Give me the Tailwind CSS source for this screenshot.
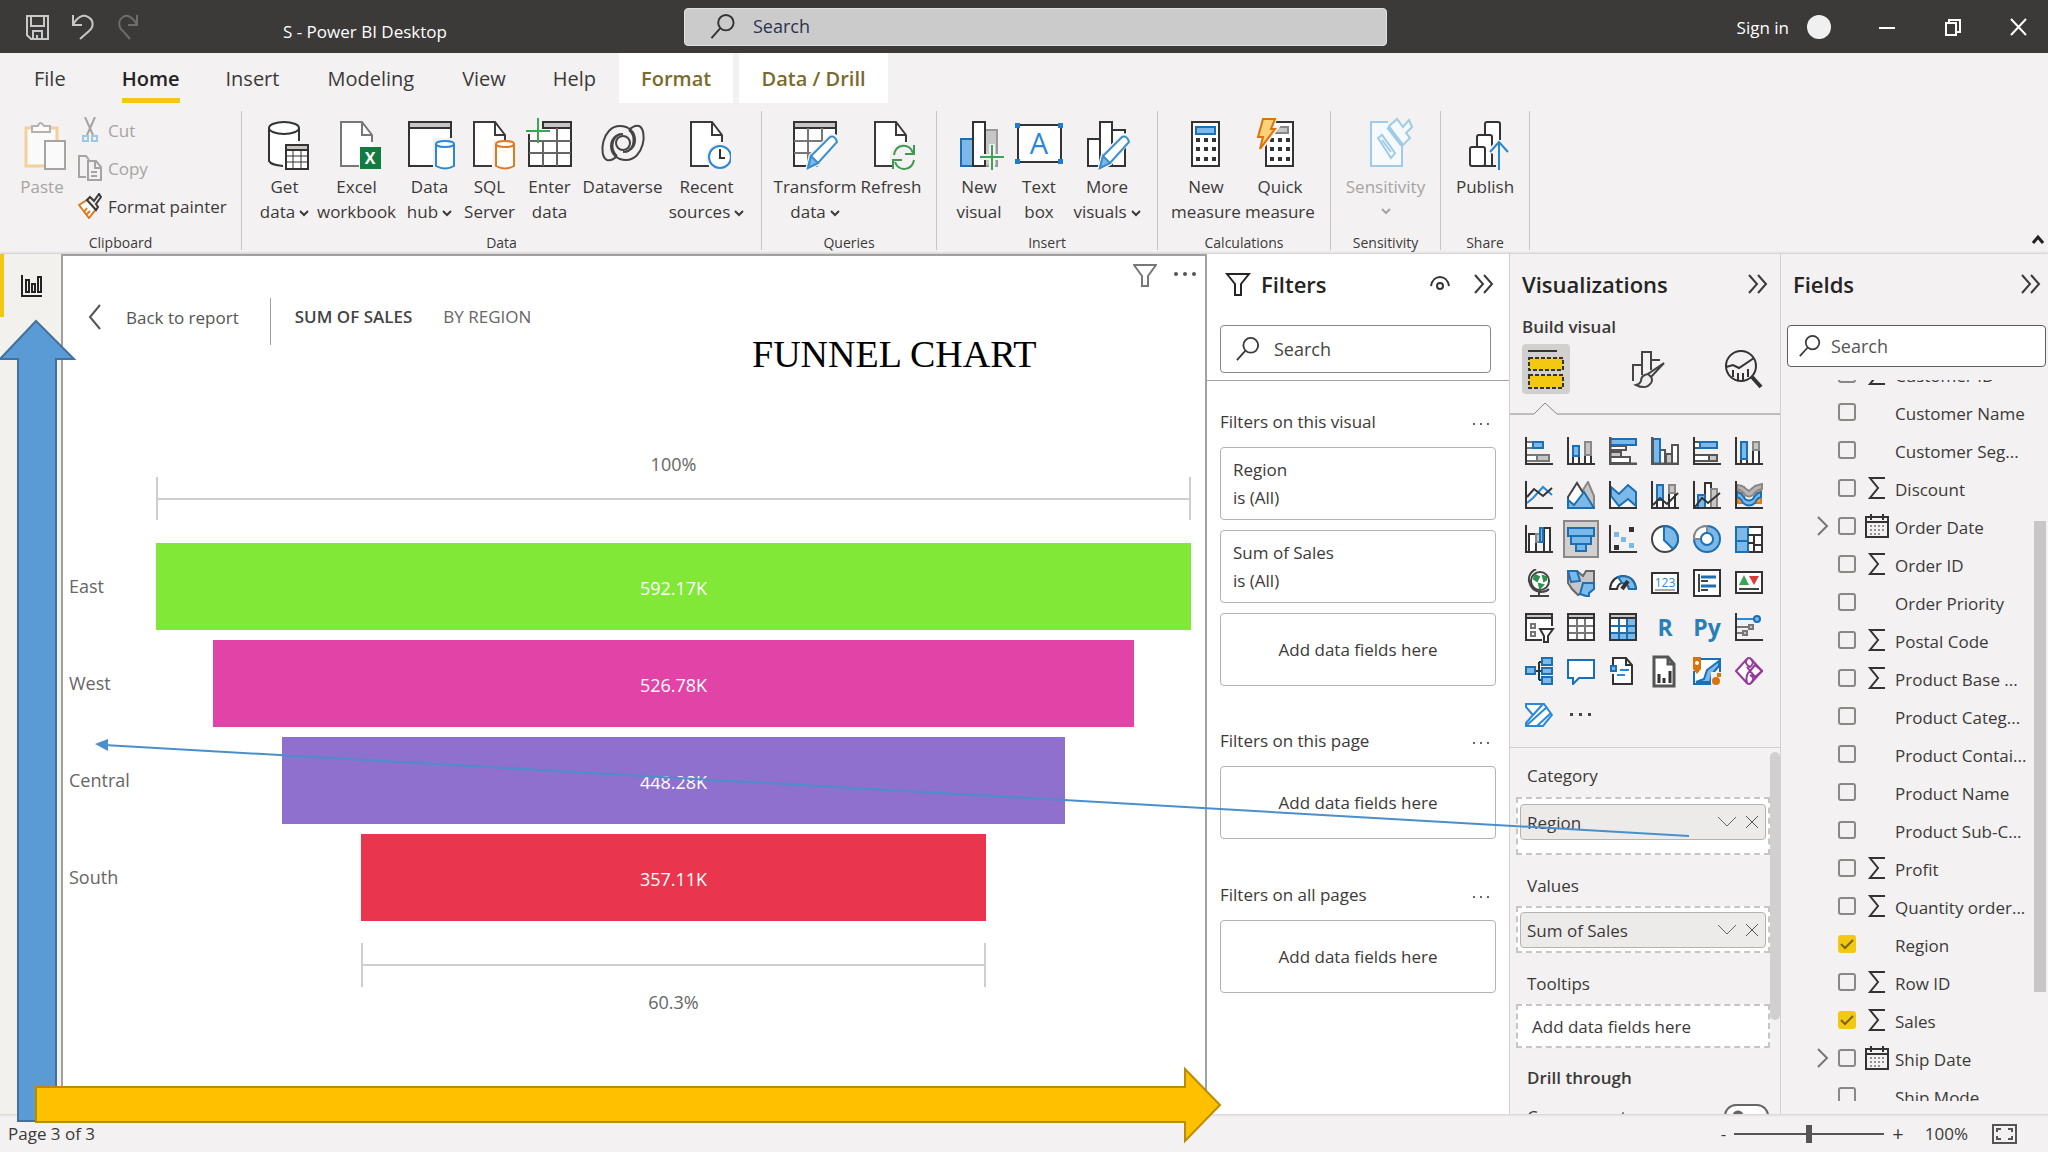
<!DOCTYPE html>
<html lang="en">
<head>
    <meta charset="UTF-8">
    <meta name="viewport" content="width=device-width, initial-scale=1.0">
    <title>S - Power BI Desktop</title>
    <script src="https://cdn.jsdelivr.net/npm/@tailwindcss/browser@4"></script>
</head>
<body class="relative flex h-screen flex-col overflow-hidden bg-[#f3f1f1] font-['Open_Sans','Noto_Sans',sans-serif] text-[17px] leading-[25px] text-[#3b3a39]">

<!-- Shared symbols -->
<svg class="hidden">
    <symbol id="doc" viewBox="0 0 48 52"><path d="M8 4h21l11 13v31H8z" fill="#fff"/><path d="M39 24v-7L29 4H8v44h18M29 4v13h10" fill="none" stroke="currentColor" stroke-width="2"/></symbol>
    <symbol id="chev" viewBox="0 0 10 8"><path d="M1 2l4 4 4-4" fill="none" stroke="currentColor" stroke-width="2"/></symbol>
    <symbol id="search" viewBox="0 0 26 26"><circle cx="16" cy="9" r="8" fill="none" stroke="currentColor" stroke-width="2"/><path d="M10 15L1 25" stroke="currentColor" stroke-width="2"/></symbol>
    <symbol id="collapse" viewBox="0 0 20 20"><path d="M1 1l8 9-8 9M10 1l8 9-8 9" fill="none" stroke="currentColor" stroke-width="2"/></symbol>
    <symbol id="pencil" viewBox="0 0 48 52"><path d="M17 50l3-12L40 18q4-1 6 4L27 45z" fill="#fff" stroke="#f3f1f1" stroke-width="5"/><path d="M17 50l3-12L39 19q5-2 7 5L27 45z" fill="#fff" stroke="#3a8fcf" stroke-width="2"/><path d="M17 50l3-12 7 7z" fill="#7db9e8" stroke="#3a8fcf" stroke-width="2"/></symbol>
    <symbol id="axis" viewBox="0 0 28 28"><path d="M1 0v27h27" fill="none" stroke="#333" stroke-width="2"/></symbol>
</svg>

<!-- Title bar -->
<header class="flex h-[53px] shrink-0 items-center bg-[#3b3a39] text-white">
    <div class="flex w-[684px] shrink-0 items-center">
        <button aria-label="Save" class="ml-[25px] h-7 w-6"><svg class="h-7 w-6" viewBox="0 0 24 28" fill="none" stroke="#c8c8c8" stroke-width="2"><path d="M2 3h21v23H6l-4-4zM6 3v10h13V3M8 26v-8h9v8M12 22v4"/></svg></button>
        <button aria-label="Undo" class="ml-[22px] h-7 w-6"><svg class="h-7 w-6" viewBox="0 0 24 28" fill="none" stroke="#c8c8c8" stroke-width="2"><path d="M2 2v10h9M2 12C6 4 12 1 17 4c6 3 6 10 1 14l-9 8"/></svg></button>
        <button aria-label="Redo" disabled class="ml-[22px] h-7 w-6"><svg class="h-7 w-6" viewBox="0 0 24 28" fill="none" stroke="#6e6d6c" stroke-width="2"><path d="M20 2v10h-9M20 12C16 4 10 1 6 4c-5 3-5 10 0 14l7 8"/></svg></button>
        <span class="ml-[142px] pt-[10px]">S - Power BI Desktop</span>
    </div>
    <label class="flex h-[38px] w-[703px] items-center rounded-sm border border-[#e0e0e0] bg-[#cbcbcb] pl-[25px] text-[#333]">
        <svg class="h-[25px] w-[26px]"><use href="#search"/></svg>
        <input type="text" aria-label="Search" placeholder="Search" class="ml-[17px] flex-1 text-[18px] outline-none placeholder:text-[#2b3350]">
    </label>
    <div class="ml-auto flex items-center">
        <button class="pt-[2px]">Sign in</button>
        <span class="ml-[18px] size-6 rounded-full bg-[#f0f0f0]"></span>
        <button aria-label="Minimize" class="ml-[46px] size-5"><svg class="size-5" viewBox="0 0 20 20"><path d="M2 11h16" stroke="#fff" stroke-width="2"/></svg></button>
        <button aria-label="Restore" class="ml-[46px] size-5"><svg class="size-5" viewBox="0 0 20 20" fill="none" stroke="#fff" stroke-width="2"><path d="M3 6h10v12H3zM6 6V3h11v12h-4"/></svg></button>
        <button aria-label="Close" class="mr-[19px] ml-[46px] size-5"><svg class="size-5" viewBox="0 0 20 20" stroke="#fff" stroke-width="2"><path d="M2 2l15 16M17 2L2 18"/></svg></button>
    </div>
</header>

<!-- Ribbon tabs -->
<nav class="flex h-[50px] shrink-0 items-stretch text-[20px]">
    <button class="ml-[34px]">File</button>
    <button class="ml-[56px] border-b-[5px] border-[#f2c811] pt-[5px] font-semibold text-[#252423]">Home</button>
    <button class="ml-[46px]">Insert</button>
    <button class="ml-[48px]">Modeling</button>
    <button class="ml-[48px]">View</button>
    <button class="ml-[47px]">Help</button>
    <button class="ml-[23px] w-[114px] bg-white font-semibold text-[#7a6a2c]">Format</button>
    <button class="ml-[6px] w-[149px] bg-white font-semibold text-[#7a6a2c]">Data / Drill</button>
</nav>

<!-- Ribbon -->
<section class="flex h-[151px] shrink-0 whitespace-nowrap pt-2 pb-1">
    <div class="flex w-[242px] flex-col border-r border-[#c8c6c4]">
        <div class="flex">
            <button disabled class="ml-[18px] flex w-12 flex-col items-center pt-[7px] text-[#a6a4a2]">
                <svg class="h-[52px] w-12" viewBox="0 0 48 52" fill="#fafafa" stroke-width="2"><path d="M8 10h31v38H8z" stroke="#f3cf9c" stroke-width="3"/><path d="M14 14v-6h6q2-6 6 0h6v6z" stroke="#b5b3b1"/><path d="M27 23h20v28H27z" stroke="#a6a4a2"/></svg>
                <span class="mt-1">Paste</span>
            </button>
            <div class="ml-3 flex flex-col">
                <button disabled class="flex h-[38px] items-center gap-[6px] text-[#a6a4a2]">
                    <svg class="h-[26px] w-6" viewBox="0 0 24 26" fill="none" stroke="#a6a4a2" stroke-width="2"><path d="M7 0l8 18M17 0L9 18"/><path d="M5 19h5v5H5zM14 19h5v5h-5z" stroke="#9cc8e6"/></svg>Cut
                </button>
                <button disabled class="flex h-[38px] items-center gap-[6px] text-[#a6a4a2]">
                    <svg class="h-[26px] w-6" viewBox="0 0 24 26" fill="none" stroke="#a6a4a2" stroke-width="2"><path d="M8 22H1V1h7l3 4M10 6h8l5 6v13H10zM17 6v7h6M13 17h6M13 21h6"/></svg>Copy
                </button>
                <button class="flex h-[38px] items-center gap-[6px]">
                    <svg class="h-[26px] w-6" viewBox="0 0 24 26" fill="none" stroke-width="2"><path d="M1 12l8-5 9 9-7 9z" fill="#fff" stroke="#e07a1f"/><path d="M6 19l3-4M8 22l4-4" stroke="#e07a1f"/><path d="M9 7l3-3 4 4 5-7 2 3-5 7 2 3-2 3z" fill="#eee" stroke="#3b3a39"/></svg>Format painter
                </button>
            </div>
        </div>
        <span class="mt-auto text-center text-[14px] leading-[14px]">Clipboard</span>
    </div>

    <div class="flex w-[520px] flex-col border-r border-[#c8c6c4]">
        <div class="flex items-start justify-center">
            <button class="flex w-[72px] flex-col items-center pt-[7px]">
                <svg class="h-[52px] w-12" viewBox="0 0 48 52" stroke="#333" stroke-width="2"><path d="M8 10v33q3 4 13 5h16V10" fill="#fff" stroke="none"/><ellipse cx="23" cy="10" rx="15" ry="6" fill="#fff"/><path d="M8 10v33q2 4 14 5M38 10v13" fill="none"/><path d="M25 27h22v24H25z" fill="#fff"/><path d="M25 27h22v5H25z" fill="#c8c6c4"/><path d="M25 38h22M25 44h22M32 32v19M40 32v19" stroke-width="1"/></svg>
                <span class="mt-1">Get<br>data<svg class="ml-1 inline h-2 w-[10px]"><use href="#chev"/></svg></span>
            </button>
            <button class="flex w-[72px] flex-col items-center pt-[7px]">
                <svg class="h-[52px] w-12" viewBox="0 0 48 52"><use href="#doc" color="#777"/><path d="M27 29h21v22H27z" fill="#107c41"/><text x="37" y="46" text-anchor="middle" font-size="16" font-weight="700" fill="#fff">X</text></svg>
                <span class="mt-1">Excel<br>workbook</span>
            </button>
            <button class="flex w-[74px] flex-col items-center pt-[7px]">
                <svg class="h-[52px] w-12 overflow-visible" viewBox="0 0 48 52" fill="#fff" stroke="#333" stroke-width="2"><path d="M3 4h42v44H3z"/><path d="M3 4h42v6H3z" fill="#c8c6c4"/><path d="M27 20h24v34H27z" fill="#f3f1f1" stroke="none"/><g stroke="#2b88d8"><path d="M30 26v22q9 5 18 0V26"/><ellipse cx="39" cy="26" rx="9" ry="3"/></g></svg>
                <span class="mt-1">Data<br>hub<svg class="ml-1 inline h-2 w-[10px]"><use href="#chev"/></svg></span>
            </button>
            <button class="flex w-[46px] flex-col items-center pt-[7px]">
                <svg class="h-[52px] w-12 overflow-visible" viewBox="0 0 48 52" fill="#fff" stroke-width="2"><use href="#doc"/><path d="M27 22h24v32H27z" fill="#f3f1f1"/><g stroke="#e07a1f"><path d="M30 26v22q9 5 18 0V26"/><ellipse cx="39" cy="26" rx="9" ry="3"/></g></svg>
                <span class="mt-1">SQL<br>Server</span>
            </button>
            <button class="flex w-[74px] flex-col items-center pt-[7px]">
                <svg class="h-[52px] w-12 overflow-visible" viewBox="0 0 48 52" fill="none" stroke="#333" stroke-width="2"><path d="M3 48V4h42v44z" fill="#fff"/><path d="M17 4h28v6H17z" fill="#c8c6c4"/><path d="M3 23h42M3 35h42M17 23v25M31 10v38" stroke="#666"/><path d="M0 1h16v15H0z" fill="#f3f1f1" stroke="none"/><path d="M12 0v25M0 13h24" stroke="#3aa655"/></svg>
                <span class="mt-1">Enter<br>data</span>
            </button>
            <button class="flex w-[72px] flex-col items-center pt-[7px]">
                <svg class="h-[52px] w-12" viewBox="0 0 48 52" fill="none" stroke="#444" stroke-width="2"><g id="swirl"><path d="M18 38c-3 3-6 5-10 4C-1 38 3 8 21 8c9 0 15 6 15 14 0 7-5 12-12 12"/><path d="M18 38c-7-6-6-18 3-22"/></g><use href="#swirl" transform="rotate(180 24 25)"/><circle cx="24" cy="25" r="7"/></svg>
                <span class="mt-1">Dataverse</span>
            </button>
            <button class="flex w-24 flex-col items-center pt-[7px]">
                <svg class="h-[52px] w-12" viewBox="0 0 48 52" fill="#fff" stroke-width="2"><use href="#doc"/><circle cx="37" cy="39" r="14" fill="#f3f1f1"/><circle cx="37" cy="39" r="11" stroke="#2b88d8"/><path d="M37 31v9h5" fill="none" stroke="#333"/></svg>
                <span class="mt-1">Recent<br>sources<svg class="ml-1 inline h-2 w-[10px]"><use href="#chev"/></svg></span>
            </button>
        </div>
        <span class="mt-auto text-center text-[14px] leading-[14px]">Data</span>
    </div>

    <div class="flex w-[175px] flex-col border-r border-[#c8c6c4]">
        <div class="flex items-start justify-center">
            <button class="flex w-[84px] flex-col items-center pt-[7px]">
                <svg class="h-[52px] w-12" viewBox="0 0 48 52" fill="none" stroke="#333" stroke-width="2"><path d="M3 4h42v44H3z" fill="#fff"/><path d="M3 4h42v6H3z" fill="#c8c6c4"/><path d="M3 23h42M3 35h42M17 10v38M31 10v38" stroke="#777"/><path d="M28 50h18V24z" fill="#f3f1f1" stroke="#f3f1f1" stroke-width="4"/><use href="#pencil"/></svg>
                <span class="mt-1">Transform<br>data<svg class="ml-1 inline h-2 w-[10px]"><use href="#chev"/></svg></span>
            </button>
            <button class="flex w-[68px] flex-col items-center pt-[7px]">
                <svg class="h-[52px] w-12" viewBox="0 0 48 52" fill="none" stroke-width="2"><use href="#doc"/><circle cx="37" cy="39" r="14" fill="#f3f1f1"/><path d="M27 37c2-12 16-12 19-2M47 27v9h-9M47 42c-2 11-15 12-19 2M26 51v-9h9" stroke="#3d9a50"/></svg>
                <span class="mt-1">Refresh</span>
            </button>
        </div>
        <span class="mt-auto text-center text-[14px] leading-[14px]">Queries</span>
    </div>

    <div class="flex w-[221px] flex-col border-r border-[#c8c6c4]">
        <div class="flex items-start justify-center">
            <button class="flex w-[60px] flex-col items-center pt-[7px]">
                <svg class="h-[52px] w-12 overflow-visible" viewBox="0 0 48 52" stroke="#333" stroke-width="2"><path d="M6 21h12v27H6z" fill="#7db9e8" stroke="#1a6fb5"/><path d="M30 12h12v36H30z" fill="#c8c6c4" stroke="#999"/><path d="M18 4h12v44H18z" fill="#fff"/><path d="M37 26v27M25 39h24" stroke="#f3f1f1" stroke-width="6"/><path d="M37 27v25M25 39h24" stroke="#3aa655" stroke-width="2"/></svg>
                <span class="mt-1">New<br>visual</span>
            </button>
            <button class="flex w-[60px] flex-col items-center pt-[7px]">
                <svg class="h-[52px] w-12" viewBox="0 0 48 52"><path d="M3 7h43v37H3z" fill="#fff" stroke="#333" stroke-width="2"/><path d="M0 5h5v5H0zM43 5h5v5h-5zM0 41h5v5H0zM43 41h5v5h-5z" fill="#1a7fd0"/><text x="24" y="36" text-anchor="middle" font-size="29" fill="#2b88d8">A</text></svg>
                <span class="mt-1">Text<br>box</span>
            </button>
            <button class="flex w-[76px] flex-col items-center pt-[7px]">
                <svg class="h-[52px] w-12" viewBox="0 0 48 52" fill="#fff" stroke="#333" stroke-width="2"><path d="M5 21h12v27H5zM29 12h13v36H29zM17 4h12v44H17z"/><use href="#pencil"/></svg>
                <span class="mt-1">More<br>visuals<svg class="ml-1 inline h-2 w-[10px]"><use href="#chev"/></svg></span>
            </button>
        </div>
        <span class="mt-auto text-center text-[14px] leading-[14px]">Insert</span>
    </div>

    <div class="flex w-[173px] flex-col border-r border-[#c8c6c4]">
        <div class="flex items-start justify-center">
            <button class="flex w-[72px] flex-col items-center pt-[7px]">
                <svg class="h-[52px] w-12" viewBox="0 0 48 52"><path d="M10 4h27v44H10z" fill="#fff" stroke="#333" stroke-width="2"/><path d="M14 9h19v7H14z" fill="#7db9e8" stroke="#1a6fb5" stroke-width="2"/><path d="M14 22h20M14 31h20M14 41h20" stroke="#333" stroke-width="4" stroke-dasharray="4 4"/></svg>
                <span class="mt-1">New<br>measure</span>
            </button>
            <button class="flex w-[76px] flex-col items-center pt-[7px]">
                <svg class="h-[52px] w-12" viewBox="0 0 48 52"><path d="M10 4h27v44H10z" fill="#fff" stroke="#333" stroke-width="2"/><path d="M16 9h16v6H16z" fill="#c8c6c4" stroke="#888" stroke-width="2"/><path d="M14 22h20M14 31h20M14 41h20" stroke="#333" stroke-width="4" stroke-dasharray="4 4"/><path d="M7 0h12l-4 10h5L3 33l3-14H1z" fill="#ffd279" stroke="#f3f1f1" stroke-width="5"/><path d="M7 1h12l-4 10h4L4 31l3-12H2z" fill="#ffd279" stroke="#d9730d" stroke-width="2"/></svg>
                <span class="mt-1">Quick<br>measure</span>
            </button>
        </div>
        <span class="mt-auto text-center text-[14px] leading-[14px]">Calculations</span>
    </div>

    <div class="flex w-[110px] flex-col border-r border-[#c8c6c4]">
        <button disabled class="flex flex-col items-center pt-[7px] text-[#a6a4a2]">
            <svg class="h-[52px] w-12 overflow-visible" viewBox="0 0 48 52" fill="#f6fafc" stroke="#9fcbe8" stroke-width="2"><path d="M26 4H9v44h31V26"/><path d="M16 20l4-3 13 18-4 5zM20 22l9 12"/><path d="M27 8l8-7 6 8 6-7 3 7-6 6 4 5-8 8z"/><path d="M26 9l14 18" stroke-width="4"/></svg>
            <span class="mt-1">Sensitivity</span>
            <svg class="mt-2 h-2 w-[10px]"><use href="#chev"/></svg>
        </button>
        <span class="mt-auto text-center text-[14px] leading-[14px]">Sensitivity</span>
    </div>

    <div class="flex w-[89px] flex-col border-r border-[#c8c6c4]">
        <button class="flex flex-col items-center pt-[7px]">
            <svg class="h-[52px] w-12" viewBox="0 0 48 52" fill="#fff" stroke="#333" stroke-width="2"><path d="M24 48V6q0-2 2-2h11q2 0 2 2v17M39 48H24"/><path d="M16 48V19q0-2 2-2h11q2 0 2 2v29z"/><rect x="9" y="29" width="15" height="19" rx="2"/><path d="M38 22v30M38 24l-9 10M38 24l9 10" stroke="#f3f1f1" stroke-width="6" fill="none"/><path d="M38 52V24M29 34l9-10 9 10" stroke="#2b88c8" fill="none"/></svg>
            <span class="mt-1">Publish</span>
        </button>
        <span class="mt-auto text-center text-[14px] leading-[14px]">Share</span>
    </div>
    <button aria-label="Collapse ribbon" class="mr-1 mb-1 ml-auto self-end"><svg class="h-3 w-3" viewBox="0 0 12 12"><path d="M1 9l5-6 5 6" fill="none" stroke="#222" stroke-width="3"/></svg></button>
</section>

<main class="flex min-h-0 flex-1 shadow-[0_0_3px_#aaa]">
    <!-- View switcher -->
    <aside class="w-[61px] shrink-0 bg-[#f3f1ee]">
        <button aria-label="Report view" class="flex h-[63px] w-full items-center border-l-4 border-[#f2c811] pl-4">
            <svg class="h-6 w-6" viewBox="0 0 24 24" fill="none" stroke="#222" stroke-width="2"><path d="M2 1v21h20M6 6h3v12H6zM12 10h3v8h-3zM18 3h3v15h-3z"/></svg>
        </button>
    </aside>

    <!-- Report canvas -->
    <section class="flex min-w-0 flex-1 flex-col border-2 border-b-0 border-[#a3a1a0] bg-white">
        <div class="flex h-[92px] shrink-0 items-start">
            <a href="#" class="mt-[48px] ml-[24px] flex items-center text-[#555]">
                <svg class="h-[26px] w-4" viewBox="0 0 16 26"><path d="M13 1L3 13l10 12" fill="none" stroke="#555" stroke-width="2"/></svg>
                <span class="ml-[23px]">Back to report</span>
            </a>
            <span class="mt-[42px] ml-[31px] h-[47px] w-px bg-[#a3a1a0]"></span>
            <span class="mt-[48px] ml-[24px] font-semibold text-[#444]">SUM OF SALES</span>
            <span class="mt-[48px] ml-[31px] text-[#666]">BY REGION</span>
            <button aria-label="Filters" class="mt-2 ml-auto"><svg class="h-6 w-6" viewBox="0 0 24 24"><path d="M1 1h22l-8 11v10H9V12z" fill="none" stroke="#777" stroke-width="2"/></svg></button>
            <button aria-label="More options" class="mt-[13px] mr-2 ml-4"><svg class="h-[10px] w-6" viewBox="0 0 24 10" fill="#555"><circle cx="3" cy="5" r="2"/><circle cx="12" cy="5" r="2"/><circle cx="21" cy="5" r="2"/></svg></button>
        </div>
        <div class="flex flex-1 flex-col pr-[14px] text-[18px] text-[#666]">
            <div class="ml-[93px] pt-[104px] text-center">100%</div>
            <div class="ml-[93px] h-[43px] border-x-2 border-[#cfcdce]"><div class="h-[23px] border-b-2 border-[#cfcdce]"></div></div>
            <div id="funnel" class="mt-[23px] flex flex-col gap-[10px]"></div>
            <div class="mt-[22px] ml-[93px] flex justify-center"><div class="h-[44px] border-x-2 border-[#cfcdce]" style="width:60.3%"><div class="h-[23px] border-b-2 border-[#cfcdce]"></div></div></div>
            <div class="mt-[3px] ml-[93px] text-center">60.3%</div>
        </div>
    </section>

    <!-- Filters -->
    <aside class="flex w-[302px] shrink-0 flex-col bg-white">
        <div class="flex h-[127px] flex-col border-b border-[#a3a1a0] pr-[18px] pl-[13px]">
            <div class="flex h-[60px] items-center pl-[5px]">
                <svg class="h-6 w-[26px]" viewBox="0 0 26 24"><path d="M2 2h22l-8 10v11h-6V12z" fill="none" stroke="#252423" stroke-width="2"/></svg>
                <h2 class="ml-[10px] text-[22px] font-semibold text-[#252423]">Filters</h2>
                <button aria-label="Hide pane" class="ml-auto"><svg class="h-4 w-5" viewBox="0 0 20 16" fill="none" stroke="#333" stroke-width="2"><path d="M1 10C3-2 17-2 19 10"/><circle cx="10" cy="10" r="3"/></svg></button>
                <button aria-label="Collapse pane" class="-mr-[3px] ml-6"><svg class="size-5"><use href="#collapse"/></svg></button>
            </div>
            <label class="mt-[11px] flex h-12 items-center rounded-sm border border-[#8a8886] pl-[15px]">
                <svg class="h-6 w-6"><use href="#search"/></svg>
                <input type="text" aria-label="Search filters" placeholder="Search" class="ml-[14px] w-40 text-[18px] outline-none placeholder:text-[#444]">
            </label>
        </div>
        <div class="flex flex-col pt-[28px] pr-[13px] pl-[13px]">
            <div class="flex items-center justify-between"><h3>Filters on this visual</h3><button aria-label="More" class="pr-1"><svg class="mt-1 h-[6px] w-5" viewBox="0 0 20 6" fill="#666"><path d="M1 2h2v2H1zM8 2h2v2H8zM15 2h2v2h-2z"/></svg></button></div>
            <div class="mt-[13px] flex h-[73px] flex-col justify-center rounded-sm border border-[#b5b3b1] pl-3 leading-[28px]"><span>Region</span><span>is (All)</span></div>
            <div class="mt-[10px] flex h-[73px] flex-col justify-center rounded-sm border border-[#b5b3b1] pl-3 leading-[28px]"><span>Sum of Sales</span><span>is (All)</span></div>
            <div class="mt-[10px] flex h-[73px] items-center justify-center rounded-sm border border-[#b5b3b1]">Add data fields here</div>
            <div class="mt-[42px] flex items-center justify-between"><h3>Filters on this page</h3><button aria-label="More" class="pr-1"><svg class="mt-1 h-[6px] w-5" viewBox="0 0 20 6" fill="#666"><path d="M1 2h2v2H1zM8 2h2v2H8zM15 2h2v2h-2z"/></svg></button></div>
            <div class="mt-[13px] flex h-[73px] items-center justify-center rounded-sm border border-[#b5b3b1]">Add data fields here</div>
            <div class="mt-[43px] flex items-center justify-between"><h3>Filters on all pages</h3><button aria-label="More" class="pr-1"><svg class="mt-1 h-[6px] w-5" viewBox="0 0 20 6" fill="#666"><path d="M1 2h2v2H1zM8 2h2v2H8zM15 2h2v2h-2z"/></svg></button></div>
            <div class="mt-[13px] flex h-[73px] items-center justify-center rounded-sm border border-[#b5b3b1]">Add data fields here</div>
        </div>
    </aside>

    <!-- Visualizations -->
    <aside class="flex w-[272px] shrink-0 flex-col overflow-hidden border-x border-[#d2d0ce]">
        <div class="flex h-[60px] shrink-0 items-center pr-3 pl-3">
            <h2 class="text-[22px] font-semibold text-[#252423]">Visualizations</h2>
            <button aria-label="Collapse pane" class="ml-auto"><svg class="size-5"><use href="#collapse"/></svg></button>
        </div>
        <h3 class="pl-3 font-semibold">Build visual</h3>
        <div class="mt-[5px] flex h-[50px] shrink-0 items-center justify-between pr-[17px] pl-3">
            <button aria-label="Build visual" class="rounded-sm bg-[#d2d0ce]"><svg class="h-[50px] w-12" viewBox="0 0 48 50" fill="#f2c811" stroke="#333" stroke-width="2"><path d="M6 7h29"/><path d="M7 14h34v12H7zM7 31h34v13H7z" stroke-dasharray="4 2"/></svg></button>
            <button aria-label="Format visual"><svg class="h-10 w-[34px]" viewBox="0 0 34 40" fill="none" stroke="#444" stroke-width="2"><path d="M2 32V16h9M11 26V3h9v18M20 11h9"/><path d="M33 14L20 28l-3-3zM17 25q-7 1-7 7-1 3-5 4 10 5 15-2 2-3 0-6" fill="#eee"/></svg></button>
            <button aria-label="Analytics"><svg class="h-10 w-[38px]" viewBox="0 0 38 40" fill="none" stroke="#333" stroke-width="2"><circle cx="16" cy="17" r="15"/><path d="M1 18l7-2 6 3 15-10M8 21v7M13 24v8M18 24v7M23 20v8"/><path d="M27 28l9 10" stroke-width="4"/></svg></button>
        </div>
        <svg class="mt-2 h-[13px] w-full shrink-0" fill="none" stroke="#8a8886"><path d="M0 12h24l11-11 12 11h240"/></svg>

        <div class="grid shrink-0 grid-cols-[repeat(6,42px)] auto-rows-[44px] place-items-center border-b border-[#d2d0ce] pt-[14px] pb-[10px] pl-2">
            <svg class="size-7" viewBox="0 0 28 28" fill="#fff" stroke="#777" stroke-width="2"><path d="M1 5h7v6H1z"/><path d="M8 5h10v6H8z" fill="#7db9e8" stroke="#1a6fb5"/><path d="M1 18h11v6H1z"/><path d="M12 18h12v6H12z" fill="#c8c6c4"/><use href="#axis"/></svg>
            <svg class="size-7" viewBox="0 0 28 28" fill="#fff" stroke="#333" stroke-width="2"><path d="M6 19h6v8H6zM18 18h6v9h-6z"/><path d="M6 9h6v10H6z" fill="#7db9e8" stroke="#1a6fb5"/><path d="M18 5h6v13h-6z" fill="#c8c6c4" stroke="#888"/><use href="#axis"/></svg>
            <svg class="size-7" viewBox="0 0 28 28" fill="#fff" stroke="#555" stroke-width="2"><path d="M1 9h16v4H1zM1 20h20v6H1z"/><path d="M1 15h11v5H1z" fill="#c8c6c4"/><path d="M1 2h26v6H1z" fill="#7db9e8" stroke="#1a6fb5"/><path d="M1 0v27h27" fill="none" stroke-width="3"/></svg>
            <svg class="size-7" viewBox="0 0 28 28" fill="#fff" stroke="#555" stroke-width="2"><path d="M9 13h5v14H9zM21 8h6v19h-6z"/><path d="M15 17h6v10h-6z" fill="#c8c6c4"/><path d="M2 2h7v25H2z" fill="#7db9e8" stroke="#1a6fb5"/><path d="M1 0v27h27" fill="none" stroke-width="3"/></svg>
            <svg class="size-7" viewBox="0 0 28 28" fill="#fff" stroke="#555" stroke-width="2"><path d="M1 5h6v6H1zM1 18h15v6H1z"/><path d="M7 5h17v6H7z" fill="#7db9e8" stroke="#1a6fb5"/><path d="M16 18h8v6h-8z" fill="#c8c6c4"/><use href="#axis"/></svg>
            <svg class="size-7" viewBox="0 0 28 28" fill="#fff" stroke="#333" stroke-width="2"><path d="M6 22h6v5H6zM18 13h6v14h-6z"/><path d="M6 5h6v17H6z" fill="#7db9e8" stroke="#1a6fb5"/><path d="M18 5h6v8h-6z" fill="#c8c6c4" stroke="#888"/><use href="#axis"/></svg>

            <svg class="size-7" viewBox="0 0 28 28" fill="none" stroke="#333" stroke-width="2"><path d="M2 22l6-5L18 6l9 8" stroke="#2b88d8"/><path d="M2 16L9 8l9 7 9-8"/><use href="#axis"/></svg>
            <svg class="size-7" viewBox="0 0 28 28" fill="#fff" stroke="#444" stroke-width="2"><path d="M14 27V12l7-11 6 14v12z" fill="#c8c6c4" stroke="#888"/><path d="M1 27V16L10 2l8 13v12z"/><path d="M1 27v-8l6 5L17 11l10 16z" fill="#7db9e8" stroke="#1a6fb5"/></svg>
            <svg class="size-7" viewBox="0 0 28 28"><path d="M2 6l8 7 9-9 8 7v14l-8-7-9 7-8-10z" fill="#7db9e8" stroke="#1a6fb5" stroke-width="2"/><use href="#axis"/></svg>
            <svg class="size-7" viewBox="0 0 28 28" fill="#fff" stroke="#333" stroke-width="2"><path d="M6 19h6v8H6zM18 12h6v15h-6z"/><path d="M6 4h6v15H6z" fill="#7db9e8" stroke="#1a6fb5"/><path d="M18 4h6v8h-6z" fill="#c8c6c4" stroke="#888"/><path d="M2 24l7-7 7 6L27 12" fill="none"/><use href="#axis"/></svg>
            <svg class="size-7" viewBox="0 0 28 28" fill="#fff" stroke="#333" stroke-width="2"><path d="M12 2h6v25h-6z"/><path d="M5 14h7v13H5z" fill="#7db9e8" stroke="#1a6fb5"/><path d="M18 8h6v19h-6z" fill="#c8c6c4" stroke="#888"/><path d="M2 26l7-9 6 5L27 12" fill="none"/><use href="#axis"/></svg>
            <svg class="size-7" viewBox="0 0 28 28" stroke-width="2"><path d="M3 6h6v6H3zM20 6h6v6h-6zM3 16h6v6H3zM20 16h6v6h-6z" fill="#f7a13b" stroke="#e07a1f"/><path d="M2 4l5 1 7 5 6-5 7-2v5q-6 1-9 6-4 3-8 0-3-5-8-6z" fill="#b8b6b4" stroke="#888"/><path d="M2 11q5 1 8 7 4 3 8 0 3-6 8-7v5q-4 1-6 6-6 5-12 0-2-5-6-6z" fill="#7db9e8" stroke="#1a6fb5"/><use href="#axis"/></svg>

            <svg class="size-7" viewBox="0 0 28 28" fill="#fff" stroke="#333" stroke-width="2"><path d="M4 9h7v18H4zM19 3h6v24h-6z"/><path d="M11 9h4v8h-4z" fill="#c8c6c4" stroke="#888"/><path d="M15 3h3v14h-3z" fill="#7db9e8" stroke="#1a6fb5"/><use href="#axis"/></svg>
            <span class="flex h-[38px] w-9 items-center justify-center border-2 border-[#8a8886] bg-[#d2d0ce]"><svg class="size-7" viewBox="0 0 28 28" fill="#7db9e8" stroke="#1a6fb5" stroke-width="2"><path d="M1 3h26v8H1zM4 11h20v8H4zM9 19h10v7H9z"/></svg></span>
            <svg class="size-7" viewBox="0 0 28 28"><use href="#axis"/><path d="M20 2h5v5h-5zM5 20h5v5H5z" fill="#333"/><path d="M5 7h5v5H5zM12 12h5v5h-5zM20 18h5v5h-5z" fill="#7db9e8"/></svg>
            <svg class="size-7" viewBox="0 0 28 28" stroke-width="2"><circle cx="14" cy="14" r="13" fill="#fff" stroke="#444"/><path d="M13 1v14l9 9q5-4 5-10-1-12-14-13z" fill="#7db9e8" stroke="#1a6fb5"/></svg>
            <svg class="size-7" viewBox="0 0 28 28" stroke-width="2"><circle cx="14" cy="14" r="13" fill="#7db9e8" stroke="#1a6fb5"/><path d="M14 1v7q-5 0-6 6H1Q1 2 14 1z" fill="#fff" stroke="#888"/><circle cx="14" cy="14" r="6" fill="#fff" stroke="#1a6fb5"/></svg>
            <svg class="size-7" viewBox="0 0 28 28" fill="#fff" stroke="#333" stroke-width="2"><path d="M1 2h26v25H1z"/><path d="M1 2h12v25H1zM1 16h12" fill="#7db9e8" stroke="#1a6fb5"/><path d="M13 10h14M19 10v17M13 18h6M19 20h8" fill="none"/></svg>

            <svg class="size-7" viewBox="0 0 28 28" fill="none" stroke="#444" stroke-width="2"><circle cx="15" cy="12" r="9" fill="#fff"/><path d="M11 0Q3 4 4 12q2 10 12 11 5 0 8-3M14 23v4M5 27h19"/><path d="M10 6l4 2-2 4-3-2zM18 7l3 1v3l-2 1zM14 15l4 1-3 3z" fill="#2f8f4e" stroke="#2f8f4e"/></svg>
            <svg class="size-7" viewBox="0 0 28 28" stroke-width="2"><path d="M1 2h9l6 5 3-5h8v12q0 7-5 10l-5-1-6 3-6-6-4-6z" fill="#c8c6c4" stroke="#666"/><path d="M1 2h9l3 10-9 1zM16 14h11v6l-5 4v3h-3l-6-2z" fill="#7db9e8" stroke="#1a6fb5"/></svg>
            <svg class="size-7" viewBox="0 0 28 28" stroke-width="2"><path d="M1 20Q2 8 14 7q12 1 13 13h-7q-1-6-6-6t-6 6z" fill="#fff" stroke="#333"/><path d="M9 8q15-4 18 12h-7q-1-6-7-6z" fill="#7db9e8" stroke="#1a6fb5"/><path d="M13 20l6-8" stroke="#333" stroke-width="4"/></svg>
            <svg class="size-7" viewBox="0 0 28 28"><path d="M1 4h26v20H1z" fill="#fff" stroke="#333" stroke-width="2"/><path d="M4 21h20" stroke="#555"/><text x="14" y="18" text-anchor="middle" font-size="12" fill="#2b88d8">123</text></svg>
            <svg class="size-7" viewBox="0 0 28 28"><path d="M1 1h26v26H1z" fill="#fff" stroke="#333" stroke-width="2"/><path d="M6 5v18M8 12h7M8 21h7" stroke="#444" stroke-width="2"/><path d="M8 8h15M8 17h15" stroke="#1a6fb5" stroke-width="3"/></svg>
            <svg class="size-7" viewBox="0 0 28 28"><path d="M1 3h26v21H1z" fill="#fff" stroke="#333" stroke-width="2"/><path d="M4 20h20" stroke="#444" stroke-width="2"/><path d="M9 6l5 10H4z" fill="#3aa655"/><path d="M14 7h10l-5 9z" fill="#d93b3b"/></svg>

            <svg class="size-7 overflow-visible" viewBox="0 0 28 28" fill="#fff" stroke="#333" stroke-width="2"><path d="M17 27H1V1h26v12"/><path d="M1 1h26v4H1z" fill="#c8c6c4"/><path d="M6 11h4v4H6zM6 19h4v4H6z" stroke="#777"/><path d="M15 16h13l-5 7v6h-4v-6z"/></svg>
            <svg class="size-7" viewBox="0 0 28 28" fill="#fff" stroke="#333" stroke-width="2"><path d="M1 1h26v26H1z"/><path d="M1 1h26v4H1z" fill="#c8c6c4"/><path d="M2 13h24M2 20h24M10 6v20M18 6v20" stroke="#777"/></svg>
            <svg class="size-7" viewBox="0 0 28 28" fill="#fff" stroke="#333" stroke-width="2"><path d="M1 1h26v26H1z"/><path d="M18 6h8v20H2v-6h16z" fill="#7db9e8" stroke="none"/><path d="M1 1h26v4H1z" fill="#c8c6c4"/><path d="M2 13h24M2 20h24M10 6v20M18 6v20" stroke="#1a6fb5"/></svg>
            <span class="text-[23px] font-bold text-[#2b7fb8]">R</span>
            <span class="text-[23px] font-bold text-[#2b7fb8]">Py</span>
            <svg class="size-7" viewBox="0 0 28 28" fill="#c8c6c4" stroke="#777" stroke-width="2"><path d="M2 6h17" stroke="#2b88d8"/><circle cx="22" cy="6" r="3" fill="#7db9e8" stroke="#1a6fb5"/><path d="M2 14h12M2 20h6M14 12h4v4h-4zM8 18h4v4H8z"/><use href="#axis"/></svg>

            <svg class="size-7" viewBox="0 0 28 28" fill="#7db9e8" stroke="#1a6fb5" stroke-width="2"><path d="M10 14h7M14 5v18M14 5h4M14 23h4" stroke="#333" fill="none"/><path d="M1 10h9v7H1zM17 1h10v7H17zM17 11h10v6H17zM17 20h10v7H17z"/></svg>
            <svg class="size-7" viewBox="0 0 28 28"><path d="M1 3h26v18H12l-6 6v-6H1z" fill="#fff" stroke="#1a6fb5" stroke-width="2"/></svg>
            <svg class="size-7" viewBox="0 0 28 28" fill="#fff" stroke="#333" stroke-width="2"><path d="M4 8V1h13l6 7v19H4V17M17 1v7h6"/><path d="M2 9h5v5H2z" fill="#7db9e8" stroke="#1a6fb5"/><path d="M11 13h9M8 18h8" stroke="#2b88d8"/></svg>
            <svg class="size-7 overflow-visible" viewBox="0 0 28 28" fill="#fff" stroke="#333" stroke-width="2"><path d="M3 0h14l6 7v22H3zM17 0v7h6" stroke-width="3" stroke="#555"/><path d="M8 26v-9M13 26v-5M19 26V14" stroke-width="3"/></svg>
            <svg class="size-7" viewBox="0 0 28 28" stroke-width="2"><path d="M3 2h24v25H1V14" fill="#fff" stroke="#1a6fb5"/><path d="M3 25l8-3 3-9 12-9v5l-7 8-2 8z" fill="#7db9e8" stroke="#1a6fb5"/><path d="M18 15h10v13H18z" fill="#f3f1f1"/><path d="M0 0h8v12l-4 5-4-5zM24 16h4v4h-4z" fill="#d9730d"/><circle cx="4" cy="6" r="2" fill="#fff"/><circle cx="23" cy="24" r="4" fill="#d9730d"/></svg>
            <svg class="size-7" viewBox="0 0 28 28" fill="#fff" stroke="#95399b" stroke-width="2"><path d="M1 14L12 2q2-2 4 0l11 12-11 12q-2 2-4 0z"/><path d="M12 2q-3 5 3 8 5-4 1-8M20 8l-5 6 5 6 7-6zM15 14l-3-4M15 14q-5 4-3 12M15 18q6 3 1 8" fill="none"/></svg>

            <svg class="size-7" viewBox="0 0 28 28" fill="#fff" stroke="#2b88d8" stroke-width="2"><path d="M1 3h18l8 11-9 11H1v-3l7-8-7-8z"/><path d="M8 14L18 3M2 24L22 6M12 25L26 12" fill="none"/></svg>
            <svg class="size-7" viewBox="0 0 28 28" fill="#444"><path d="M3 12h3v3H3zM12 12h3v3h-3zM21 12h3v3h-3z"/></svg>
        </div>

        <!-- Field wells -->
        <div class="flex min-h-0 flex-1 overflow-hidden pt-1">
            <div class="flex flex-1 flex-col pl-[6px]">
                <h4 class="mt-[11px] pl-[11px]">Category</h4>
                <div class="mt-[9px] h-[58px] shrink-0 border-2 border-dashed border-[#c8c6c4] bg-white px-[2px] pt-[5px]">
                    <div class="flex h-9 items-center rounded-sm border border-[#b5b3b1] bg-[#edebe9] pr-[6px] pl-[6px]">Region
                        <button aria-label="Options" class="ml-auto"><svg class="h-3 w-5" viewBox="0 0 20 12"><path d="M1 1l9 9 9-9" fill="none" stroke="#666"/></svg></button>
                        <button aria-label="Remove" class="ml-2"><svg class="size-[14px]" viewBox="0 0 14 14"><path d="M1 1l12 12M13 1L1 13" stroke="#555"/></svg></button>
                    </div>
                </div>
                <h4 class="mt-[18px] pl-[11px]">Values</h4>
                <div class="mt-[8px] h-[47px] shrink-0 border-2 border-dashed border-[#c8c6c4] bg-white px-[2px] pt-[4px]">
                    <div class="flex h-9 items-center rounded-sm border border-[#b5b3b1] bg-[#edebe9] pr-[6px] pl-[6px]">Sum of Sales
                        <button aria-label="Options" class="ml-auto"><svg class="h-3 w-5" viewBox="0 0 20 12"><path d="M1 1l9 9 9-9" fill="none" stroke="#666"/></svg></button>
                        <button aria-label="Remove" class="ml-2"><svg class="size-[14px]" viewBox="0 0 14 14"><path d="M1 1l12 12M13 1L1 13" stroke="#555"/></svg></button>
                    </div>
                </div>
                <h4 class="mt-[18px] pl-[11px]">Tooltips</h4>
                <div class="mt-[8px] flex h-[44px] shrink-0 items-center border-2 border-dashed border-[#c8c6c4] bg-white pl-[14px]">Add data fields here</div>
                <h4 class="mt-[17px] pl-[11px] font-semibold">Drill through</h4>
                <label class="mt-[14px] flex shrink-0 items-start justify-between pr-[1px] pl-[11px]">Cross-report
                    <input type="checkbox" class="h-6 w-[45px] appearance-none rounded-full border-2 border-[#666] bg-[radial-gradient(circle_at_12px_10px,#666_5px,#fff_6px)]">
                </label>
            </div>
            <div class="h-[268px] w-[10px] rounded-full bg-[#d2d0ce]"></div>
        </div>
    </aside>

    <!-- Fields -->
    <aside class="flex w-[267px] shrink-0 flex-col">
        <div class="flex h-[60px] shrink-0 items-center pr-[7px] pl-3">
            <h2 class="text-[22px] font-semibold text-[#252423]">Fields</h2>
            <button aria-label="Collapse pane" class="ml-auto"><svg class="size-5"><use href="#collapse"/></svg></button>
        </div>
        <label class="mt-[11px] mr-[2px] ml-[6px] flex h-[42px] shrink-0 items-center rounded-sm border border-[#605e5c] bg-white pl-[11px]">
            <svg class="h-[22px] w-[22px]"><use href="#search"/></svg>
            <input type="text" aria-label="Search fields" placeholder="Search" class="ml-[10px] w-40 text-[18px] outline-none placeholder:text-[#555]">
        </label>
        <div class="mt-[13px] mb-[13px] flex min-h-0 flex-1 overflow-hidden">
            <div id="fields" class="-mt-[25px] flex-1"></div>
            <div class="mt-[141px] mr-[2px] h-[471px] w-3 bg-[#c8c6c6]"></div>
        </div>
    </aside>
</main>

<!-- Status bar -->
<footer class="flex h-[38px] shrink-0 items-center border-t border-[#dcdad8] pl-2">
    <span>Page 3 of 3</span>
    <button class="ml-auto">-</button>
    <input type="range" aria-label="Zoom" min="0" max="100" value="50" class="mx-[8px] h-5 w-[150px] appearance-none bg-[linear-gradient(#555,#555)] bg-[length:100%_2px] bg-center bg-no-repeat [&::-webkit-slider-thumb]:h-[18px] [&::-webkit-slider-thumb]:w-[6px] [&::-webkit-slider-thumb]:appearance-none [&::-webkit-slider-thumb]:bg-[#555]">
    <button class="text-[20px]">+</button>
    <span class="ml-[21px]">100%</span>
    <button aria-label="Fit to page" class="mr-[31px] ml-6"><svg class="h-5 w-[25px]" viewBox="0 0 25 20" fill="none" stroke="#555" stroke-width="2"><path d="M1 1h23v18H1zM5 8V5h4M16 5h4v3M5 12v3h4M16 15h4v-3"/></svg></button>
</footer>

<!-- Annotations drawn over the report -->
<div class="pointer-events-none absolute inset-0">
    <svg class="h-full w-full">
        <path d="M36 321l38 38H56v762H18V359H0z" fill="#5b9bd5" stroke="#41719c" stroke-width="2"/>
        <path d="M36 1087h1149v-18l35 36-35 36v-19H36z" fill="#ffc000" stroke="#bc8c00" stroke-width="2"/>
        <path d="M1689 836L104 745" stroke="#4a8fcb" stroke-width="2"/>
        <path d="M95 744l13-5v12z" fill="#4a8fcb"/>
    </svg>
    <p class="absolute top-[334px] left-[752px] font-['Liberation_Serif',serif] text-[38px] leading-[40px] text-black">FUNNEL CHART</p>
</div>

<script>
const regions = [
    { name: 'East', value: '592.17K', width: 100, color: '#82e838' },
    { name: 'West', value: '526.78K', width: 88.96, color: '#e243a6' },
    { name: 'Central', value: '448.28K', width: 75.7, color: '#8f70cf' },
    { name: 'South', value: '357.11K', width: 60.3, color: '#e9364e' }
];

document.getElementById('funnel').innerHTML = regions.map(r => `
    <div class="flex h-[87px] items-center">
        <span class="w-[93px] pl-[6px]">${r.name}</span>
        <div class="flex h-full flex-1 justify-center">
            <div class="flex h-full items-center justify-center pt-1 text-white" style="width:${r.width}%;background:${r.color}">${r.value}</div>
        </div>
    </div>
`).join('');

const fields = [
    ['Customer ID', 'sum'], ['Customer Name'], ['Customer Seg...'], ['Discount', 'sum'], ['Order Date', 'date'],
    ['Order ID', 'sum'], ['Order Priority'], ['Postal Code', 'sum'], ['Product Base ...', 'sum'], ['Product Categ...'],
    ['Product Contai...'], ['Product Name'], ['Product Sub-C...'], ['Profit', 'sum'], ['Quantity order...', 'sum'],
    ['Region', '', true], ['Row ID', 'sum'], ['Sales', 'sum', true], ['Ship Date', 'date'], ['Ship Mode']
];

const icons = {
    sum: '<svg class="h-6 w-6" viewBox="0 0 24 24"><path d="M20 2H5l8 10-8 10h15" fill="none" stroke="#333" stroke-width="2"/></svg>',
    date: '<svg class="h-6 w-6" viewBox="0 0 24 24" fill="none" stroke="#333" stroke-width="2"><path d="M1 3h22v20H1zM1 8h22M6 0v6M18 0v6"/><path d="M5 12h15M5 16h15M5 20h12" stroke-width="1" stroke-dasharray="2 2"/></svg>'
};

document.getElementById('fields').innerHTML = fields.map(([name, type, checked]) => `
    <label class="flex h-[38px] items-center whitespace-nowrap">
        <span class="w-[57px] pl-[36px]">${type === 'date' ? '<svg class="h-5 w-3" viewBox="0 0 12 20"><path d="M1 1l9 9-9 9" fill="none" stroke="#777" stroke-width="2"/></svg>' : ''}</span>
        <span class="relative flex">
            <input type="checkbox" ${checked ? 'checked' : ''} class="size-[18px] appearance-none rounded-[3px] border-2 border-[#8a8886] checked:border-[#f2c811] checked:bg-[#f2c811]">
            ${checked ? '<svg class="absolute inset-0 size-[18px]" viewBox="0 0 18 18"><path d="M3 9l4 4 8-8" fill="none" stroke="#7a6508" stroke-width="2"/></svg>' : ''}
        </span>
        <span class="ml-[9px] w-[30px]">${icons[type] || ''}</span>
        <span class="pt-[2px]">${name}</span>
    </label>
`).join('');
</script>
</body>
</html>
